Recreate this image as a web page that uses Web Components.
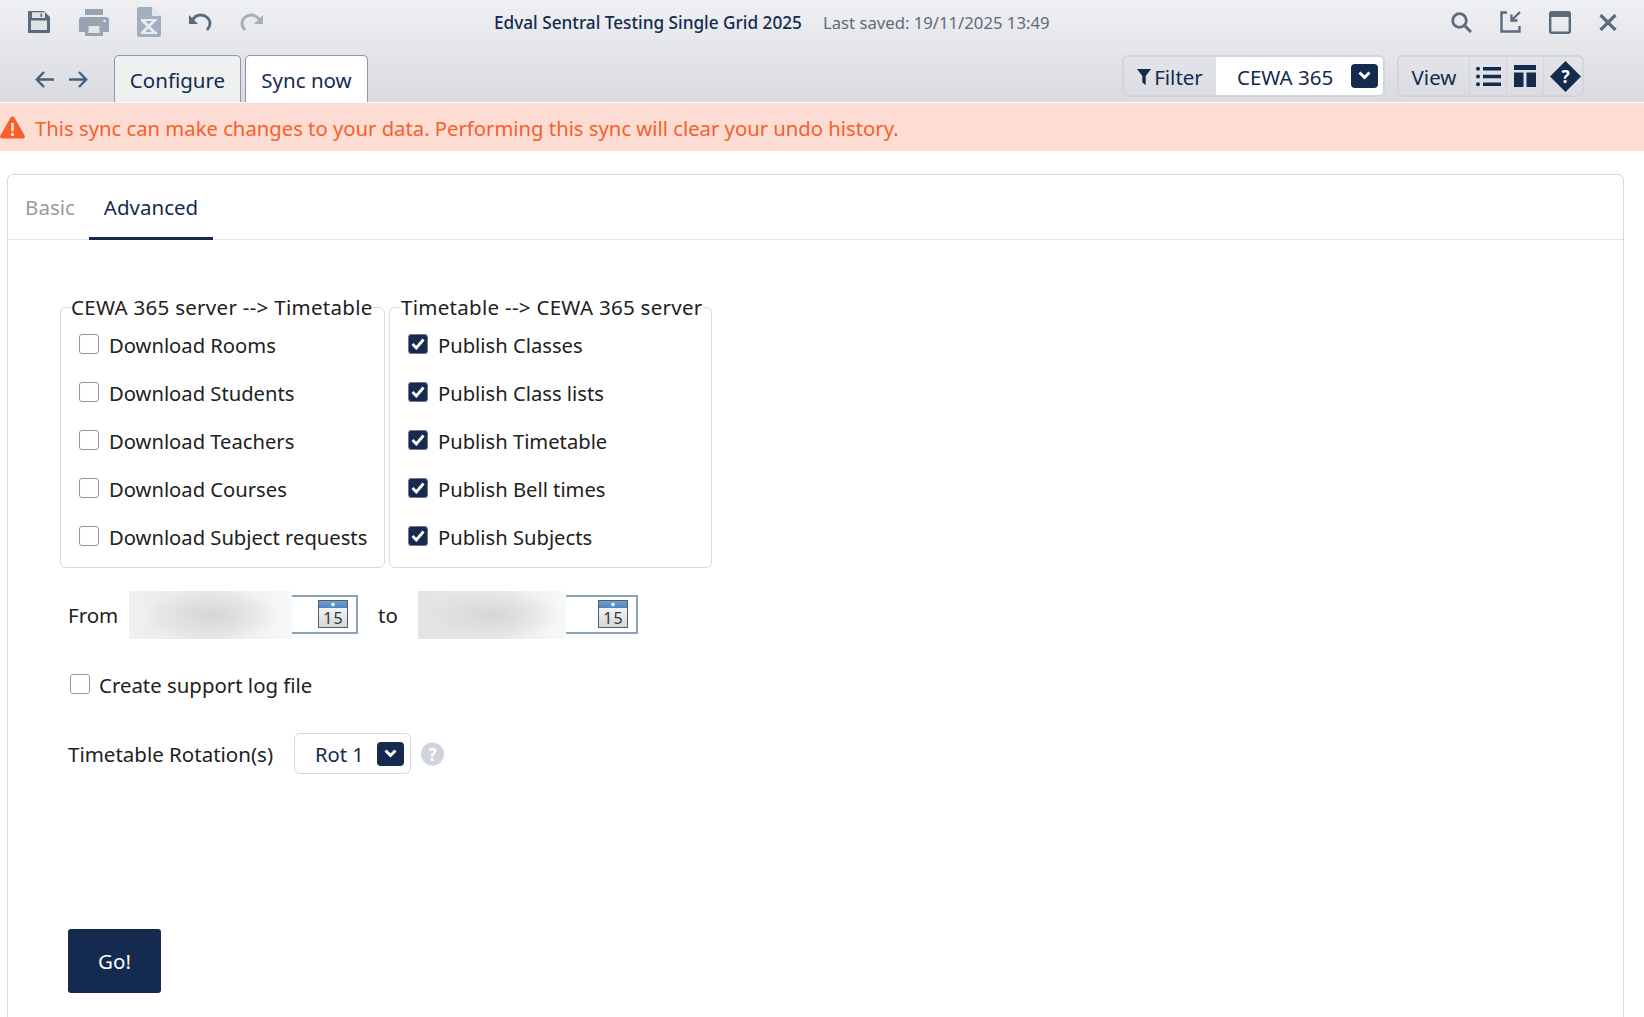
<!DOCTYPE html>
<html>
<head>
<meta charset="utf-8">
<title>Edval Sentral</title>
<style>
    html, body { margin: 0; height: 100%; background: #fff; }
    body { font-family: "Noto Sans", "Open Sans", sans-serif; overflow: hidden; }
</style>
</head>
<body>
<edv-toolbar></edv-toolbar>
<edv-banner>This sync can make changes to your data. Performing this sync will clear your undo history.</edv-banner>
<edv-panel>
    <edv-sync-form></edv-sync-form>
</edv-panel>

<script>
const NAVY = '#142b4f';

const CHEVRON = `<svg width="13" height="9" viewBox="0 0 13 9"><path d="M1.500 1.500 6.500 6.500l5-5" fill="none" stroke="#fff" stroke-width="3"/></svg>`;

class EdvToolbar extends HTMLElement {
    connectedCallback() {
        this.attachShadow({ mode: 'open' });
        this.shadowRoot.innerHTML = `
            <style>
                :host {
                    display: block;
                    height: 102px;
                    margin-bottom: 1px;
                    background: linear-gradient(#eff0f4, #d9dbe0);
                    color: ${NAVY};
                }
                .top { display: flex; align-items: center; height: 44px; padding: 0 27px 0 28px; }
                .top svg { display: block; flex: none; }
                .left { display: flex; align-items: center; gap: 28px; }
                .left svg:first-child { margin-right: 1px; }
                .title { margin-left: 231px; font-size: 17.2px; font-weight: 500; white-space: nowrap; }
                .saved { margin-left: 21px; font-size: 16.7px; color: #5f6b78; white-space: nowrap; }
                .right { margin-left: auto; display: flex; align-items: center; gap: 28px; }
                .bottom { display: flex; align-items: flex-end; height: 47px; margin-top: 11px; padding-left: 35px; }
                .nav { display: flex; gap: 15px; align-self: center; margin-right: 26px; margin-top: 2px; }
                .tabs { display: flex; gap: 4px; }
                .tab {
                    display: flex; align-items: center; justify-content: center;
                    box-sizing: border-box; height: 47px; padding-top: 2px;
                    border: 1.5px solid #8d98ac; border-bottom: 0;
                    border-radius: 5px 5px 0 0;
                    font-size: 20.5px;
                    background: #eff1f1;
                }
                .tab.configure { width: 127px; }
                .tab.sync { width: 123px; background: #fff; }
                .groups { margin-left: auto; display: flex; gap: 12px; align-self: flex-start; padding-right: 60px; }
                .group {
                    display: flex; align-items: stretch;
                    height: 38px;
                    border: 2px solid #d2d5db; border-radius: 6px;
                    font-size: 20.5px;
                }
                .cell { display: flex; align-items: center; justify-content: center; border-left: 1.5px solid #d2d5db; padding-top: 1px; box-sizing: border-box; }
                .cell:first-child { border-left: 0; }
                .filter { width: 92px; gap: 3px; }
                .picker { width: 167px; background: #fff; border-left: 0; border-radius: 0 4px 4px 0; justify-content: flex-start; padding-left: 21px; }
                .caret {
                    display: flex; align-items: center; justify-content: center;
                    width: 27px; height: 24px; border-radius: 4px; background: ${NAVY};
                    margin-left: auto; margin-right: 5px; margin-top: -2px;
                }
                .view { width: 70px; }
                .ico { width: 37px; padding-top: 0; }
                .ico.list { padding-left: 1px; }
                .ico.help { width: 39px; padding-left: 5px; }
            </style>
            <div class="top">
                <div class="left">
                    <svg width="22" height="22" viewBox="0 0 22 22"><path fill="#5b6b7c" d="M1 0h15l6 6v15a1 1 0 0 1-1 1H1a1 1 0 0 1-1-1V1a1 1 0 0 1 1-1z"/><path fill="#dfe2e6" d="M4 1.300h13v5.700H4zM3 9.500h16V19H3z"/><path fill="#5b6b7c" d="M12.500 2.500H14V6h-1.500z"/></svg>
                    <svg width="30" height="27" viewBox="0 0 30 27"><path fill="#98a4b3" d="M6 0h18v6H6zM3 8h24a3 3 0 0 1 3 3v12h-6v4H6v-4H0V11a3 3 0 0 1 3-3z"/><path fill="#e3e5e9" d="M9.500 17h11v7h-11z"/><circle cx="25.500" cy="12" r="1.300" fill="#e6e8ec"/></svg>
                    <svg width="24" height="30" viewBox="0 0 24 30" style="margin-top:-1px"><path fill="#a3afbd" d="M2 0h13l9 9v19a2 2 0 0 1-2 2H2a2 2 0 0 1-2-2V2a2 2 0 0 1 2-2z"/><path fill="#e4e6ea" d="M15 0v9h9z"/><path fill="none" stroke="#e9ebee" stroke-width="3" d="M5 13l13 13M18 13 5 26"/><path fill="#e9ebee" d="M4 12h16v2H4zM4 25h16v2H4z"/></svg>
                    <svg width="23" height="19" viewBox="0 0 23 19"><path fill="none" stroke="#5b6b7c" stroke-width="2.800" d="M2.500 8.500C5 4 8 2 11.500 2 17 2 21 6 21 10.500 21 13 20 15 18 17"/><path fill="#5b6b7c" d="M0 2v9h9z"/></svg>
                    <svg width="23" height="19" viewBox="0 0 23 19"><path fill="none" stroke="#a3afbd" stroke-width="2.800" d="M20.500 8.500C18 4 15 2 11.500 2 6 2 2 6 2 10.500 2 13 3 15 5 17"/><path fill="#a3afbd" d="M23 2v9h-9z"/></svg>
                </div>
                <div class="title">Edval Sentral Testing Single Grid 2025</div>
                <div class="saved">Last saved: 19/11/2025 13:49</div>
                <div class="right">
                    <svg width="21" height="21" viewBox="0 0 21 21"><circle cx="8.500" cy="8.500" r="6.800" fill="none" stroke="#5b6b7c" stroke-width="2.800"/><path stroke="#5b6b7c" stroke-width="3" d="M13.500 13.500 20 20"/></svg>
                    <svg width="21" height="22" viewBox="0 0 21 22"><path fill="none" stroke="#5b6b7c" stroke-width="2.400" d="M7 1.500H1.500v19h18V15"/><path fill="none" stroke="#5b6b7c" stroke-width="2.400" d="M20 1 12 9M11.500 3.500V9.500H17.500"/></svg>
                    <svg width="22" height="23" viewBox="0 0 22 23"><rect x="1.200" y="1.200" width="19.600" height="20.600" rx="1.500" fill="none" stroke="#5b6b7c" stroke-width="2.400"/><path fill="#5b6b7c" d="M1 1h20v5H1z"/></svg>
                    <svg width="18" height="17" viewBox="0 0 18 17"><path stroke="#5b6b7c" stroke-width="3.200" d="M1.500 1 16.500 16M16.500 1 1.500 16"/></svg>
                </div>
            </div>
            <div class="bottom">
                <div class="nav">
                    <svg width="19" height="17" viewBox="0 0 19 17"><path fill="none" stroke="#47607e" stroke-width="2.400" d="M19 8.500H2M9 1 1.800 8.500 9 16"/></svg>
                    <svg width="19" height="17" viewBox="0 0 19 17"><path fill="none" stroke="#47607e" stroke-width="2.400" d="M0 8.500h17M10 1l7.200 7.500L10 16"/></svg>
                </div>
                <div class="tabs">
                    <div class="tab configure">Configure</div>
                    <div class="tab sync">Sync now</div>
                </div>
                <div class="groups">
                    <div class="group">
                        <div class="cell filter">
                            <svg width="14" height="16" viewBox="0 0 14 16"><path fill="${NAVY}" d="M0 0h14L8.700 7v9L5.300 13.500V7z"/></svg>
                            <span>Filter</span>
                        </div>
                        <div class="cell picker">
                            <span>CEWA 365</span>
                            <span class="caret">${CHEVRON}</span>
                        </div>
                    </div>
                    <div class="group">
                        <div class="cell view">View</div>
                        <div class="cell ico list">
                            <svg width="25" height="21" viewBox="0 0 25 21"><path fill="${NAVY}" d="M7 1h18v3.600H7zM7 8.700h18v3.600H7zM7 16.400h18V20H7z"/><circle cx="2" cy="2.800" r="2" fill="${NAVY}"/><circle cx="2" cy="10.500" r="2" fill="${NAVY}"/><circle cx="2" cy="18.200" r="2" fill="${NAVY}"/></svg>
                        </div>
                        <div class="cell ico">
                            <svg width="22" height="22" viewBox="0 0 22 22"><path fill="${NAVY}" d="M0 0h22v5H0zM0 7.500h9.500V22H0zM12.500 7.500H22V22h-9.500z"/></svg>
                        </div>
                        <div class="cell ico help">
                            <svg width="31" height="31" viewBox="0 0 31 31"><path fill="${NAVY}" d="M15.500 0 31 15.500 15.500 31 0 15.500z"/><text x="15.500" y="21.500" text-anchor="middle" font-family="Noto Sans" font-weight="700" font-size="17" fill="#fff">?</text></svg>
                        </div>
                    </div>
                </div>
            </div>
        `;
    }
}

class EdvBanner extends HTMLElement {
    connectedCallback() {
        this.attachShadow({ mode: 'open' });
        this.shadowRoot.innerHTML = `
            <style>
                :host {
                    display: flex; align-items: center; gap: 10px;
                    height: 48px; padding-top: 1px; box-sizing: border-box;
                    background: #fddcd3;
                    color: #f75f2b;
                    font-size: 20.25px;
                }
                svg { flex: none; margin-top: -1px; }
            </style>
            <svg width="25" height="25" viewBox="0 0 25 25"><path fill="#f75f2b" d="M12.500 1.500c.8 0 1.500.4 1.900 1.100l10.200 18c.8 1.400-.2 3-1.900 3H2.300c-1.700 0-2.700-1.600-1.900-3l10.200-18c.4-.7 1.100-1.100 1.900-1.100z"/><path fill="#fddcd3" d="M11 8h3l-.4 8.500h-2.200zM11 18h3v3h-3z"/></svg>
            <slot></slot>
        `;
    }
}

class EdvPanel extends HTMLElement {
    connectedCallback() {
        this.attachShadow({ mode: 'open' });
        this.shadowRoot.innerHTML = `
            <style>
                :host {
                    display: block;
                    margin: 23px 20px 0 7px;
                    height: 843px;
                    box-sizing: border-box;
                    border: 1.5px solid #d3d9e0;
                    border-bottom: 0;
                    border-radius: 6px 6px 0 0;
                }
                .tabs { display: flex; height: 65px; border-bottom: 1px solid #e3e6ea; box-sizing: border-box; font-size: 20.5px; }
                .tab { display: flex; align-items: center; justify-content: center; box-sizing: border-box; }
                .basic { width: 81px; padding-left: 3px; color: #9b9b9b; }
                .advanced { width: 124px; color: ${NAVY}; border-bottom: 3px solid ${NAVY}; margin-bottom: -1px; padding-top: 1px; }
            </style>
            <div class="tabs">
                <div class="tab basic">Basic</div>
                <div class="tab advanced">Advanced</div>
            </div>
            <slot></slot>
        `;
    }
}

class EdvCheck extends HTMLElement {
    connectedCallback() {
        const on = this.hasAttribute('checked');
        this.attachShadow({ mode: 'open' });
        this.shadowRoot.innerHTML = `
            <style>
                :host {
                    display: flex; align-items: center; gap: 10px;
                    height: 48px;
                    font-size: 20.2px;
                    color: #212121;
                    white-space: nowrap;
                }
                .box {
                    flex: none; width: 20px; height: 20px; box-sizing: border-box;
                    border: 1.5px solid #8d98ac; border-radius: 3px;
                    background: #fff; display: flex; align-items: center; justify-content: center;
                    margin-top: -3px;
                }
                .box.on { background: ${NAVY}; border-color: #6d7c95; }
            </style>
            <span class="box ${on ? 'on' : ''}">${on ? '<svg width="14" height="12" viewBox="0 0 14 12"><path d="M1.500 6 5.300 10 12.500 1.500" fill="none" stroke="#fff" stroke-width="2.800"/></svg>' : ''}</span>
            <slot></slot>
        `;
    }
}

class EdvGroup extends HTMLElement {
    connectedCallback() {
        const label = this.getAttribute('label');
        this.attachShadow({ mode: 'open' });
        this.shadowRoot.innerHTML = `
            <style>
                :host { display: block; }
                fieldset {
                    margin: 0; padding: 0 0 0 18px;
                    box-sizing: border-box;
                    width: var(--w, 325px); height: 275px;
                    border: 1px solid #d3dbe3; border-radius: 6px;
                }
                legend {
                    padding: 0;
                    margin-left: var(--lm, -8px);
                    font-size: 20.5px;
                    letter-spacing: .29px;
                    line-height: 28px;
                    color: #212121;
                    white-space: nowrap;
                }
            </style>
            <fieldset>
                <legend>${label}</legend>
                <div><slot></slot></div>
            </fieldset>
        `;
    }
}

class EdvDate extends HTMLElement {
    connectedCallback() {
        const blur = this.getAttribute('blur') || '163';
        const width = this.getAttribute('width') || '229';
        const left = this.getAttribute('left') || '#eaebeb';
        this.attachShadow({ mode: 'open' });
        this.shadowRoot.innerHTML = `
            <style>
                :host { display: block; position: relative; flex: none; height: 48px; width: ${width}px; }
                .field {
                    margin-top: 4px; height: 39px; box-sizing: border-box;
                    border: 2px solid #8ea2b8;
                    display: flex; justify-content: flex-end; align-items: center;
                    padding-right: 8px; background: #fff;
                }
                .mask {
                    position: absolute; left: 0; top: 0; bottom: 0; width: ${blur}px;
                    background:
                        radial-gradient(ellipse 70px 26px at 50% 50%, #d5d6d6, rgba(229,230,230,0) 100%),
                        linear-gradient(90deg, ${left} 0%, #e7e8e8 50%, #f8f9f9 100%);
                }
                svg { display: block; margin-top: -2px; }
            </style>
            <div class="field">
                <svg width="30" height="28" viewBox="0 0 30 28">
                    <defs>
                        <linearGradient id="b" x1="0" x2="0" y1="0" y2="1"><stop offset="0" stop-color="#6c9fd3"/><stop offset="1" stop-color="#4f86c0"/></linearGradient>
                        <linearGradient id="g" x1="0" x2="0" y1="0" y2="1"><stop offset="0" stop-color="#fff"/><stop offset="1" stop-color="#d4d6d8"/></linearGradient>
                    </defs>
                    <rect x=".5" y=".5" width="29" height="27" fill="url(#g)" stroke="#555c62"/>
                    <rect x="1" y="1" width="28" height="7" fill="url(#b)"/>
                    <circle cx="15" cy="4.500" r="1.800" fill="#fff"/>
                    <text x="15.500" y="24" text-anchor="middle" font-family="Noto Sans" font-size="16" letter-spacing="1" fill="#33383c">15</text>
                </svg>
            </div>
            <div class="mask"></div>
        `;
    }
}

class EdvSelect extends HTMLElement {
    connectedCallback() {
        this.attachShadow({ mode: 'open' });
        this.shadowRoot.innerHTML = `
            <style>
                :host {
                    display: flex; align-items: center;
                    width: 117px; height: 41px; box-sizing: border-box;
                    border: 1.5px solid #d3d9e0; border-radius: 6px;
                    padding-left: 20px;
                    font-size: 20.2px; color: ${NAVY};
                    background: #fff;
                }
                .caret {
                    display: flex; align-items: center; justify-content: center;
                    width: 27px; height: 24px; border-radius: 4px; background: ${NAVY};
                    margin-left: auto; margin-right: 6px;
                }
            </style>
            <slot></slot>
            <span class="caret">${CHEVRON}</span>
        `;
    }
}

class EdvButton extends HTMLElement {
    connectedCallback() {
        this.attachShadow({ mode: 'open' });
        this.shadowRoot.innerHTML = `
            <style>
                :host {
                    display: flex; align-items: center; justify-content: center;
                    width: 93px; height: 64px;
                    border-radius: 3px;
                    background: ${NAVY}; color: #fff;
                    font-size: 20.5px;
                }
            </style>
            <slot></slot>
        `;
    }
}

class EdvSyncForm extends HTMLElement {
    connectedCallback() {
        this.attachShadow({ mode: 'open' });
        this.shadowRoot.innerHTML = `
            <style>
                :host {
                    display: block;
                    padding: 53px 0 0 52px;
                    color: #212121;
                    font-size: 20.5px;
                }
                .groups { display: flex; gap: 4px; }
                .second { --w: 323px; --lm: -7px; }
                .dates { display: flex; align-items: center; margin: 23px 0 0 8px; height: 48px; }
                .from { width: 61px; }
                .to { width: 60px; padding-left: 20px; box-sizing: border-box; }
                .log { margin: 26px 0 0 10px; }
                .log edv-check { height: 40px; font-size: 20.4px; gap: 9px; }
                .rotation { display: flex; align-items: center; margin: 28px 0 0 8px; height: 41px; }
                .rotation .lbl { width: 226px; white-space: nowrap; }
                .help { margin-left: 10px; display: block; }
                .go { margin: 155px 0 0 8px; }
            </style>
            <div class="groups">
                <edv-group label="CEWA 365 server --&gt; Timetable">
                    <edv-check>Download Rooms</edv-check>
                    <edv-check>Download Students</edv-check>
                    <edv-check>Download Teachers</edv-check>
                    <edv-check>Download Courses</edv-check>
                    <edv-check>Download Subject requests</edv-check>
                </edv-group>
                <edv-group class="second" label="Timetable --&gt; CEWA 365 server">
                    <edv-check checked>Publish Classes</edv-check>
                    <edv-check checked>Publish Class lists</edv-check>
                    <edv-check checked>Publish Timetable</edv-check>
                    <edv-check checked>Publish Bell times</edv-check>
                    <edv-check checked>Publish Subjects</edv-check>
                </edv-group>
            </div>
            <div class="dates">
                <span class="from">From</span>
                <edv-date blur="163" width="229" left="#eff0f0"></edv-date>
                <span class="to">to</span>
                <edv-date blur="148" width="220" left="#e3e4e4"></edv-date>
            </div>
            <div class="log"><edv-check>Create support log file</edv-check></div>
            <div class="rotation">
                <span class="lbl">Timetable Rotation(s)</span>
                <edv-select>Rot 1</edv-select>
                <svg class="help" width="23" height="24" viewBox="0 0 23 24"><circle cx="11.500" cy="12" r="11.500" fill="#cfd4dc"/><text x="11.500" y="18.500" text-anchor="middle" font-family="Noto Sans" font-weight="700" font-size="17" fill="#fff">?</text></svg>
            </div>
            <div class="go"><edv-button>Go!</edv-button></div>
        `;
    }
}

customElements.define('edv-toolbar', EdvToolbar);
customElements.define('edv-banner', EdvBanner);
customElements.define('edv-panel', EdvPanel);
customElements.define('edv-check', EdvCheck);
customElements.define('edv-group', EdvGroup);
customElements.define('edv-date', EdvDate);
customElements.define('edv-select', EdvSelect);
customElements.define('edv-button', EdvButton);
customElements.define('edv-sync-form', EdvSyncForm);
</script>
</body>
</html>
